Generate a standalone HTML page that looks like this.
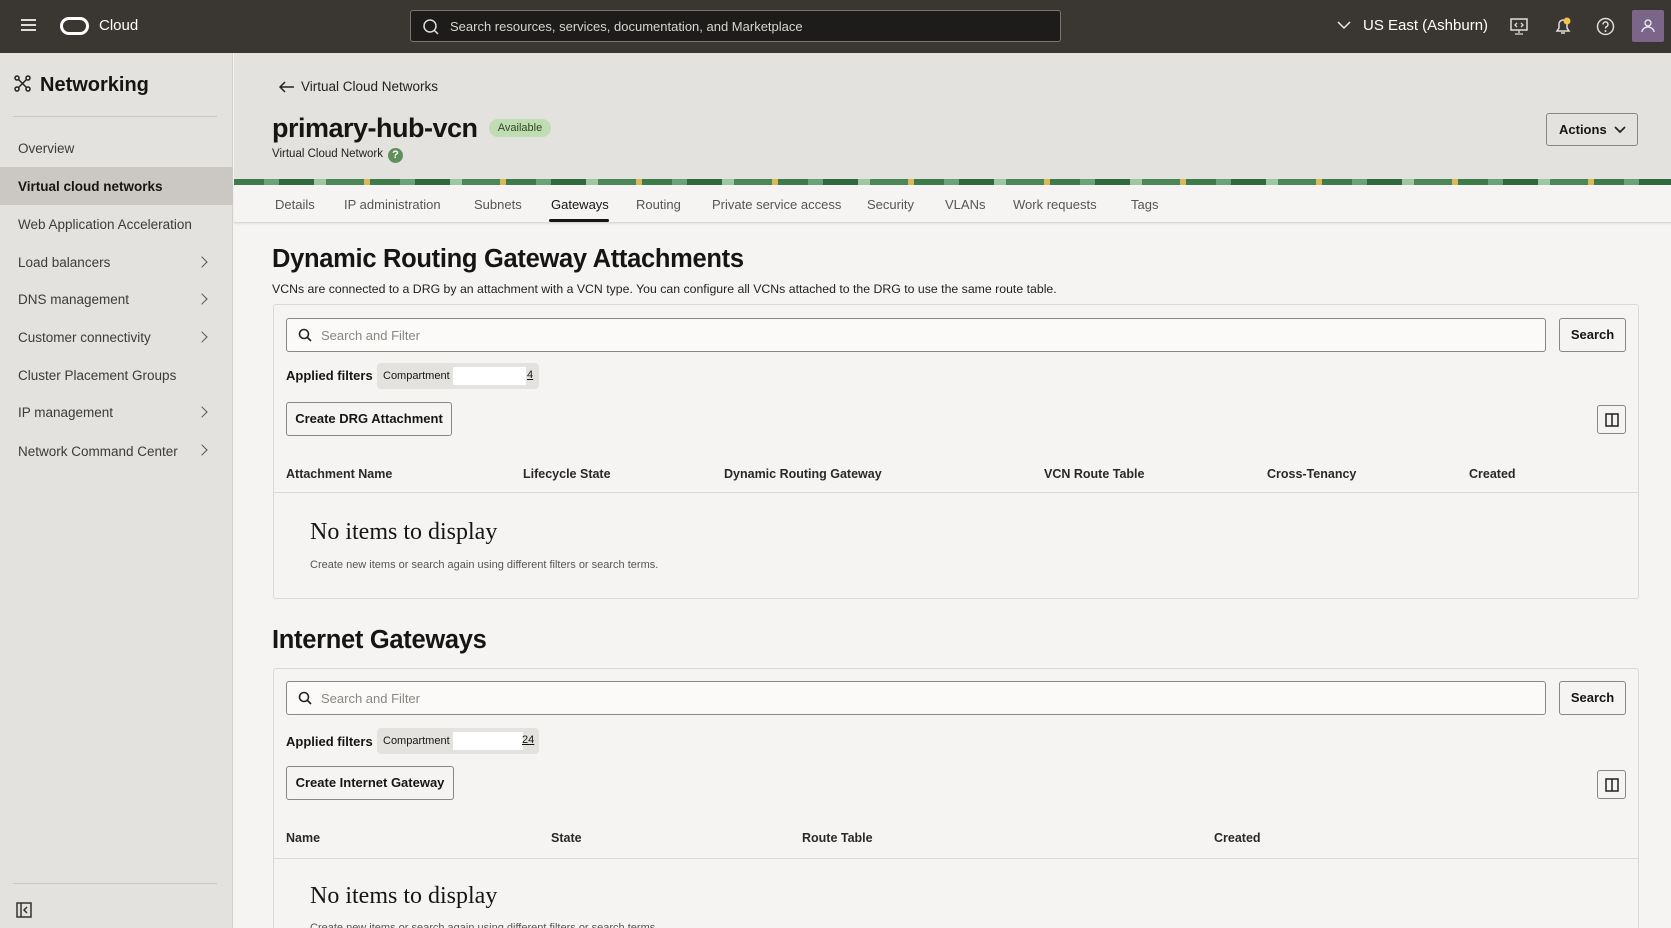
<!DOCTYPE html>
<html><head><meta charset="utf-8"><style>
*{box-sizing:border-box;margin:0;padding:0}
html{width:1671px;height:928px;overflow:hidden}
body{width:1671px;height:928px;overflow:hidden;font-family:"Liberation Sans",sans-serif;background:#f5f4f2;color:#161513;position:relative}
.a{position:absolute;white-space:nowrap}
.hdr{position:absolute;left:0;top:0;width:1671px;height:53px;background:#3a3632}
.side{position:absolute;left:0;top:53px;width:233px;height:875px;background:#e4e2de;border-right:1px solid #d4d1cc}
.si{position:absolute;left:18px;font-size:13.5px;color:#3d3a37}
.chev{position:absolute;left:198px;width:8px;height:8px;border-right:1.5px solid #555;border-top:1.5px solid #555;transform:rotate(45deg)}
.top{position:absolute;left:234px;top:53px;width:1437px;height:132px;background:#e4e2de}
.tabs{position:absolute;left:234px;top:185px;width:1437px;height:38px;background:#f5f4f2;border-bottom:1px solid #dcd9d4;box-shadow:0 1px 2px rgba(0,0,0,.08)}
.tab{position:absolute;top:12px;font-size:13px;color:#555}
.panel{position:absolute;left:273px;width:1366px;border:1px solid #dcd9d4;border-radius:3px}
.inp{position:absolute;left:286px;width:1260px;height:34px;border:1px solid #8a8681;border-radius:3px;background:#fbfaf9}
.inp span{position:absolute;left:34px;top:9px;font-size:13px;color:#8a8681}
.btn{position:absolute;border:1px solid #8a8681;border-radius:3px;font-size:13px;font-weight:bold;color:#161513;text-align:center;background:#f5f4f2}
.ch{position:absolute;font-size:12.5px;font-weight:bold;color:#2b2926}
.line{position:absolute;left:273px;width:1366px;height:1px;background:#dcd9d4}
.ni{position:absolute;left:310px;font-family:"Liberation Serif",serif;font-size:24px;color:#161513}
.chip{position:absolute;left:377px;width:162px;height:26px;background:#e4e2de;border-radius:4px;font-size:11px}
</style></head><body>
<div class="hdr">
 <div class="a" style="left:21px;top:19px;width:15px;height:2px;background:#ddd;box-shadow:0 5px 0 #ddd,0 10px 0 #ddd"></div>
 <div class="a" style="left:60px;top:17px;width:29px;height:18px;border:3px solid #fff;border-radius:9px"></div>
 <div class="a" style="left:99px;top:17px;font-size:15px;color:#fff">Cloud</div>
 <div class="a" style="left:410px;top:10px;width:651px;height:32px;background:#1e1c1a;border:1px solid #7a756f;border-radius:3px">
  <svg class="a" style="left:11px;top:7px" width="18" height="18" viewBox="0 0 18 18"><circle cx="8" cy="8" r="6" fill="none" stroke="#ddd" stroke-width="1.5"/><path d="M12.5 12.5L16 16" stroke="#ddd" stroke-width="1.5"/></svg>
  <div class="a" style="left:39px;top:8px;font-size:13px;color:#d8d5d0">Search resources, services, documentation, and Marketplace</div>
 </div>
 <svg class="a" style="left:1337px;top:20px" width="14" height="10"><path d="M1 2l6 6 6-6" fill="none" stroke="#eee" stroke-width="1.5"/></svg>
 <div class="a" style="left:1363px;top:17px;font-size:15px;color:#fff">US East (Ashburn)</div>
 <svg class="a" style="left:1510px;top:17px" width="18" height="18"><rect x="1" y="2" width="16" height="11" fill="none" stroke="#ddd" stroke-width="1.5"/><path d="M9 13v3M5 17h8M7 6l-2 2 2 2M11 6l2 2-2 2" stroke="#ddd" stroke-width="1.3" fill="none"/></svg>
 <svg class="a" style="left:1553px;top:16px" width="20" height="20"><path d="M4 15h12l-2-3V8a4 4 0 0 0-8 0v4zM8 17h4" fill="none" stroke="#ddd" stroke-width="1.5"/><circle cx="14" cy="5" r="3.5" fill="#f2c14e"/></svg>
 <svg class="a" style="left:1596px;top:17px" width="19" height="19"><circle cx="9.5" cy="9.5" r="8" fill="none" stroke="#ddd" stroke-width="1.5"/><path d="M7 7.5a2.5 2.5 0 1 1 3.5 2.2c-.8.4-1 .9-1 1.8" fill="none" stroke="#ddd" stroke-width="1.5"/><circle cx="9.5" cy="14" r="1" fill="#ddd"/></svg>
 <div class="a" style="left:1632px;top:10px;width:32px;height:32px;background:#7b6689;border-radius:2px">
  <svg class="a" style="left:9px;top:8px" width="14" height="16"><circle cx="7" cy="5" r="3" fill="none" stroke="#eee" stroke-width="1.3"/><path d="M1 14a6 5 0 0 1 12 0" fill="none" stroke="#eee" stroke-width="1.3"/></svg>
 </div>
</div>
<div class="side">
 <svg class="a" style="left:14px;top:22px" width="17" height="17"><circle cx="3" cy="3" r="2" fill="none" stroke="#222" stroke-width="1.5"/><circle cx="14" cy="3" r="2" fill="none" stroke="#222" stroke-width="1.5"/><circle cx="3" cy="14" r="2" fill="none" stroke="#222" stroke-width="1.5"/><circle cx="14" cy="14" r="2" fill="none" stroke="#222" stroke-width="1.5"/><path d="M4.5 4.5l8 8M12.5 4.5l-8 8" stroke="#222" stroke-width="1.5"/></svg>
 <div class="a" style="left:40px;top:21px;font-size:20px;font-weight:bold">Networking</div>
 <div class="a" style="left:13px;top:63px;width:204px;height:1px;background:#c8c5c0"></div>
 <div class="a" style="left:0;top:114px;width:233px;height:38px;background:#cbc8c3"></div>
 <div class="si" style="top:88px">Overview</div>
 <div class="si" style="top:126px;color:#161513;font-weight:bold">Virtual cloud networks</div>
 <div class="si" style="top:164px">Web Application Acceleration</div>
 <div class="si" style="top:202px">Load balancers</div><div class="chev" style="top:205px"></div>
 <div class="si" style="top:239px">DNS management</div><div class="chev" style="top:242px"></div>
 <div class="si" style="top:277px">Customer connectivity</div><div class="chev" style="top:280px"></div>
 <div class="si" style="top:315px">Cluster Placement Groups</div>
 <div class="si" style="top:352px">IP management</div><div class="chev" style="top:355px"></div>
 <div class="si" style="top:391px">Network Command Center</div><div class="chev" style="top:393px"></div>
 <div class="a" style="left:13px;top:830px;width:204px;height:1px;background:#c8c5c0"></div>
 <svg class="a" style="left:16px;top:849px" width="16" height="16"><rect x="1" y="1" width="14" height="14" fill="none" stroke="#333" stroke-width="1.5"/><path d="M5 1v14M11 5l-3 3 3 3" fill="none" stroke="#333" stroke-width="1.5"/></svg>
</div>
<div class="top">
 <svg class="a" style="left:45px;top:28px" width="16" height="12"><path d="M15 6H2M6 1L1 6l5 5" fill="none" stroke="#222" stroke-width="1.5"/></svg>
 <div class="a" style="left:67px;top:26px;font-size:13.5px;color:#222">Virtual Cloud Networks</div>
 <div class="a" style="left:38px;top:60px;font-size:27px;font-weight:bold;letter-spacing:-0.5px">primary-hub-vcn</div>
 <div class="a" style="left:255px;top:66px;width:62px;height:18px;background:#bfdcb3;border-radius:9px;font-size:11px;text-align:center;line-height:18px;color:#2c4a23">Available</div>
 <div class="a" style="left:38px;top:95px;font-size:11.5px;color:#222">Virtual Cloud Network</div>
 <div class="a" style="left:154px;top:95px;width:15px;height:15px;border-radius:50%;background:#5f8f5b;color:#fff;font-size:11px;font-weight:bold;text-align:center;line-height:15px">?</div>
 <div class="a" style="left:1312px;top:60px;width:92px;height:33px;border:1px solid #8a8681;border-radius:3px;font-size:13px;font-weight:bold;line-height:31px;padding-left:12px">Actions</div>
 <svg class="a" style="left:1380px;top:72px" width="12" height="10"><path d="M1 2l5 5 5-5" fill="none" stroke="#222" stroke-width="1.7"/></svg>
 <div class="a" style="left:0;top:126px;width:1437px;height:6px;background:repeating-linear-gradient(90deg,#3f7a4a 0 30px,#6aa377 30px 45px,#2f6a3c 45px 80px,#9cc7a0 80px 92px,#4c8756 92px 130px,#d9b95a 130px 136px)"></div>
</div>
<div class="tabs">
 <div class="tab" style="left:41px">Details</div>
 <div class="tab" style="left:110px">IP administration</div>
 <div class="tab" style="left:240px">Subnets</div>
 <div class="tab" style="left:317px;color:#161513">Gateways</div>
 <div class="a" style="left:315px;top:34px;width:60px;height:3px;background:#161513;border-radius:2px"></div>
 <div class="tab" style="left:402px">Routing</div>
 <div class="tab" style="left:478px">Private service access</div>
 <div class="tab" style="left:633px">Security</div>
 <div class="tab" style="left:711px">VLANs</div>
 <div class="tab" style="left:779px">Work requests</div>
 <div class="tab" style="left:897px">Tags</div>
</div>

<div class="a" style="left:272px;top:245px;font-size:25.5px;font-weight:bold;letter-spacing:-0.3px">Dynamic Routing Gateway Attachments</div>
<div class="a" style="left:272px;top:282px;font-size:12.3px;color:#222">VCNs are connected to a DRG by an attachment with a VCN type. You can configure all VCNs attached to the DRG to use the same route table.</div>
<div class="panel" style="top:304px;height:295px"></div>
<div class="inp" style="top:318px"><svg class="a" style="left:11px;top:9px" width="15" height="15"><circle cx="6" cy="6" r="4.5" fill="none" stroke="#222" stroke-width="1.6"/><path d="M9.5 9.5L13 13" stroke="#222" stroke-width="1.6"/></svg><span>Search and Filter</span></div>
<div class="btn" style="left:1559px;top:318px;width:67px;height:34px;line-height:32px">Search</div>
<div class="a" style="left:286px;top:368px;font-size:13px;font-weight:bold">Applied filters</div>
<div class="chip" style="top:363px"><span class="a" style="left:6px;top:7px">Compartment</span><span class="a" style="left:76px;top:4px;width:73px;height:18px;background:#fff"></span><span class="a" style="left:150px;top:6px;text-decoration:underline">4</span></div>
<div class="btn" style="left:286px;top:402px;width:166px;height:34px;line-height:32px">Create DRG Attachment</div>
<div class="btn" style="left:1597px;top:405px;width:29px;height:29px"><svg class="a" style="left:7px;top:7px" width="14" height="14"><rect x="1" y="1" width="12" height="12" fill="none" stroke="#222" stroke-width="1.5"/><path d="M7 1v12" stroke="#222" stroke-width="1.5"/></svg></div>
<div class="ch" style="left:286px;top:467px">Attachment Name</div>
<div class="ch" style="left:523px;top:467px">Lifecycle State</div>
<div class="ch" style="left:724px;top:467px">Dynamic Routing Gateway</div>
<div class="ch" style="left:1044px;top:467px">VCN Route Table</div>
<div class="ch" style="left:1267px;top:467px">Cross-Tenancy</div>
<div class="ch" style="left:1469px;top:467px">Created</div>
<div class="line" style="top:492px"></div>
<div class="ni" style="top:519px">No items to display</div>
<div class="a" style="left:310px;top:559px;font-size:11px;color:#555">Create new items or search again using different filters or search terms.</div>

<div class="a" style="left:272px;top:626px;font-size:25.5px;font-weight:bold;letter-spacing:-0.3px">Internet Gateways</div>
<div class="panel" style="top:668px;height:266px"></div>
<div class="inp" style="top:681px"><svg class="a" style="left:11px;top:9px" width="15" height="15"><circle cx="6" cy="6" r="4.5" fill="none" stroke="#222" stroke-width="1.6"/><path d="M9.5 9.5L13 13" stroke="#222" stroke-width="1.6"/></svg><span>Search and Filter</span></div>
<div class="btn" style="left:1559px;top:681px;width:67px;height:34px;line-height:32px">Search</div>
<div class="a" style="left:286px;top:734px;font-size:13px;font-weight:bold">Applied filters</div>
<div class="chip" style="top:728px"><span class="a" style="left:6px;top:7px">Compartment</span><span class="a" style="left:76px;top:4px;width:70px;height:18px;background:#fff"></span><span class="a" style="left:145px;top:6px;text-decoration:underline">24</span></div>
<div class="btn" style="left:286px;top:766px;width:168px;height:34px;line-height:32px">Create Internet Gateway</div>
<div class="btn" style="left:1597px;top:770px;width:29px;height:29px"><svg class="a" style="left:7px;top:7px" width="14" height="14"><rect x="1" y="1" width="12" height="12" fill="none" stroke="#222" stroke-width="1.5"/><path d="M7 1v12" stroke="#222" stroke-width="1.5"/></svg></div>
<div class="ch" style="left:286px;top:831px">Name</div>
<div class="ch" style="left:551px;top:831px">State</div>
<div class="ch" style="left:802px;top:831px">Route Table</div>
<div class="ch" style="left:1214px;top:831px">Created</div>
<div class="line" style="top:858px"></div>
<div class="ni" style="top:883px">No items to display</div>
<div class="a" style="left:310px;top:922px;font-size:11px;color:#555">Create new items or search again using different filters or search terms.</div>
</body></html>
